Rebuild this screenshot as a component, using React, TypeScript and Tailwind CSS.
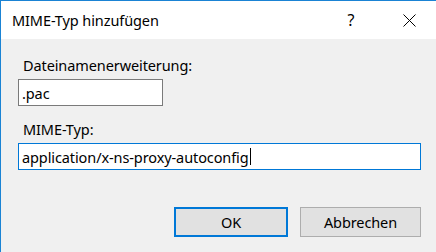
import React from "react";

export default function App() {
  const font = { fontFamily: '"Noto Sans", "Open Sans", sans-serif' };
  return (
    <div
      className="w-[436px] h-[252px] flex flex-col border-l border-t border-[#1a83d4] bg-[#f0f0f0] overflow-hidden text-[14.5px] tracking-[-0.1px] text-black"
      style={font}
    >
      <div className="h-[38px] bg-white flex items-center shrink-0">
        <div className="pl-[11px] flex-1 leading-[20px]">MIME-Typ hinzufügen</div>
        <div className="w-[46px] flex justify-center text-[16px] leading-[20px] mr-[12px]">?</div>
        <div className="w-[46px] h-full flex items-center justify-center mr-[4px]">
          <svg width="13" height="13" viewBox="0 0 13 13">
            <path d="M0.5 0.5 L12.5 12.5 M12.5 0.5 L0.5 12.5" stroke="#000" strokeWidth="1" fill="none" />
          </svg>
        </div>
      </div>
      <div className="flex-1 flex flex-col pl-[17px] pr-[15px] pt-[16px]">
        <div className="pl-[5px] leading-[20px]">Dateinamenerweiterung:</div>
        <div className="mt-[4px] w-[145px] h-[27px] bg-white border border-[#7a7a7a] flex items-center pl-[3px] leading-[20px]">
          .pac
        </div>
        <div className="mt-[13px] pl-[5px] leading-[20px]">MIME-Typ:</div>
        <div className="mt-[4px] w-full h-[27px] bg-white border border-[#0078d7] flex items-center pl-[3px] leading-[20px]">
          <span>application/x-ns-proxy-autoconfig</span>
          <span className="inline-block w-px h-[17px] bg-black ml-px" />
        </div>
        <div className="mt-[37px] flex justify-end gap-[12px]">
          <div className="w-[114px] h-[30px] bg-[#e1e1e1] border-2 border-[#0078d7] flex items-center justify-center leading-[20px]">
            OK
          </div>
          <div className="w-[121px] h-[30px] bg-[#e1e1e1] border border-[#adadad] flex items-center justify-center leading-[20px]">
            Abbrechen
          </div>
        </div>
      </div>
    </div>
  );
}
